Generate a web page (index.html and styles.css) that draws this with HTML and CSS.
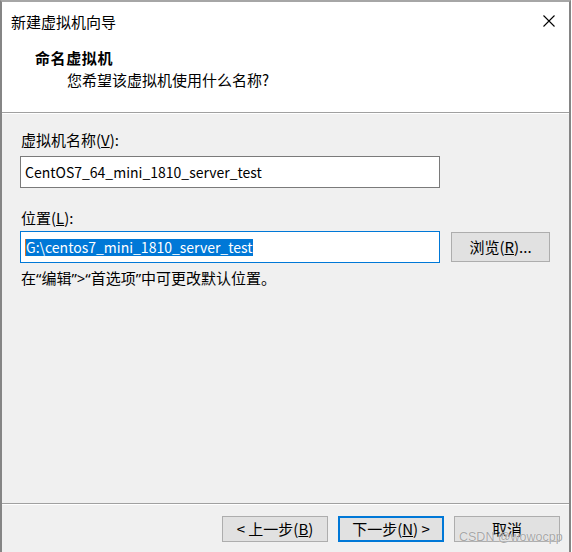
FILE: index.html
```html
<!DOCTYPE html>
<html lang="zh-CN">
<head>
<meta charset="utf-8">
<title>新建虚拟机向导</title>
<link rel="stylesheet" href="styles.css">
</head>
<body>
<div class="window">
  <div class="header">
    <div class="titlebar">
      <span class="title">新建虚拟机向导</span>
      <svg class="close" width="12" height="12" viewBox="0 0 12 12"><path d="M0.5 0.5 L11.5 11.5 M11.5 0.5 L0.5 11.5" stroke="#000" stroke-width="1.1" fill="none"/></svg>
    </div>
    <div class="heading">命名虚拟机</div>
    <div class="subtitle">您希望该虚拟机使用什么名称?</div>
  </div>
  <div class="body">
    <div class="label label-first">虚拟机名称(<u>V</u>):</div>
    <div class="field">CentOS7_64_mini_1810_server_test</div>
    <div class="label label-second">位置(<u>L</u>):</div>
    <div class="row">
      <div class="field focused"><span class="caret"></span><span class="sel">G:\centos7_mini_1810_server_test</span></div>
      <div class="btn browse">浏览(<u>R</u>)...</div>
    </div>
    <div class="hint">在“编辑”&gt;“首选项”中可更改默认位置。</div>
  </div>
  <div class="footer">
    <div class="btn">&lt; 上一步(<u>B</u>)</div>
    <div class="btn default">下一步(<u>N</u>) &gt;</div>
    <div class="btn">取消</div>
  </div>
  <div class="watermark">CSDN @wowocpp</div>
</div>
</body>
</html>
```
FILE: styles.css
```css
html, body {
  margin: 0;
  padding: 0;
  background: #ffffff;
}
body {
  font-family: "Noto Sans CJK SC", sans-serif;
  font-size: 15px;
  color: #000;
}
.window {
  position: relative;
  width: 571px;
  height: 552px;
  box-sizing: border-box;
  border-left: 2px solid #858585;
  border-right: 2px solid #858585;
  border-top: 2px solid #a6a6a6;
  background: #f0f0f0;
  display: flex;
  flex-direction: column;
}
.header {
  height: 110px;
  background: #fff;
  border-bottom: 1px solid #a0a0a0;
  flex: none;
}
.titlebar {
  height: 40px;
  display: flex;
  align-items: center;
  justify-content: space-between;
  padding: 0 14px 0 9px;
}
.title {
  line-height: 20px;
}
.close {
  display: block;
  margin-top: -2px;
}
.heading {
  margin: 6px 0 0 33px;
  line-height: 20px;
  font-weight: bold;
  letter-spacing: 0.6px;
}
.subtitle {
  margin: 2px 0 0 65px;
  line-height: 20px;
}
.body {
  flex: none;
  height: 389px;
  border-top: 1px solid #fff;
  border-bottom: 1px solid #a0a0a0;
  padding-left: 18px;
}
.label {
  line-height: 20px;
  padding-left: 1px;
}
.label-first {
  margin-top: 16px;
  margin-bottom: 6px;
}
.label-second {
  margin-top: 20px;
  margin-bottom: 3px;
}
.field {
  box-sizing: border-box;
  width: 420px;
  height: 32px;
  border: 1px solid #7a7a7a;
  background: #fff;
  padding-left: 4px;
  display: flex;
  align-items: center;
  line-height: 20px;
  font-size: 14px;
  white-space: nowrap;
}
.field.focused {
  border-color: #0078d7;
  padding-left: 4px;
}
.caret {
  width: 1px;
  height: 17px;
  background: #e07020;
}
.sel {
  background: #0078d7;
  color: #fff;
  line-height: 17px;
}
.row {
  display: flex;
  align-items: center;
  gap: 11px;
}
.btn {
  box-sizing: border-box;
  width: 106px;
  height: 26px;
  background: #e1e1e1;
  border: 1px solid #adadad;
  display: flex;
  align-items: center;
  justify-content: center;
  line-height: 20px;
  white-space: nowrap;
}
.btn.browse {
  width: 99px;
  height: 30px;
}
.btn.default {
  border: 2px solid #0078d7;
}
.hint {
  margin-top: 5px;
  line-height: 20px;
  padding-left: 1px;
  font-family: "Noto Sans", "Noto Sans CJK SC", sans-serif;
}
.footer {
  flex: 1;
  border-top: 1px solid #fff;
  display: flex;
  justify-content: flex-end;
  gap: 10px;
  padding: 11px 9px 0 0;
}
.watermark {
  position: absolute;
  left: 457px;
  top: 528px;
  font-family: "Liberation Sans", sans-serif;
  font-size: 12.5px;
  line-height: 14px;
  white-space: nowrap;
  color: rgba(145, 145, 145, 0.8);
  text-shadow: 0 0 1px #fff;
  pointer-events: none;
}
```
